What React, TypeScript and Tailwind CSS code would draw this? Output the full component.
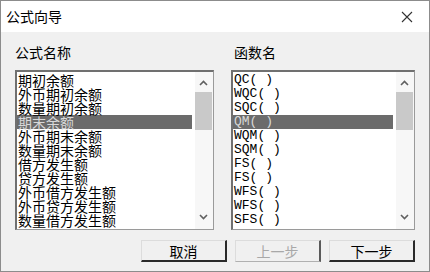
import React from "react";

const cjk = "font-['Noto_Sans_CJK_SC','Noto_Sans',sans-serif]";
const mono = "font-['Liberation_Mono','Noto_Sans_CJK_SC',monospace]";

const formulaNames = [
  "期初余额",
  "外币期初余额",
  "数量期初余额",
  "期末余额",
  "外币期末余额",
  "数量期末余额",
  "借方发生额",
  "贷方发生额",
  "外币借方发生额",
  "外币贷方发生额",
  "数量借方发生额",
];

const functionNames = [
  "QC( )",
  "WQC( )",
  "SQC( )",
  "QM( )",
  "WQM( )",
  "SQM( )",
  "FS( )",
  "FS( )",
  "WFS( )",
  "WFS( )",
  "SFS( )",
];

function Chevron({ up }: { up?: boolean }) {
  return (
    <svg width="9" height="6" viewBox="0 0 9 6" className="text-[#606060]">
      <path
        d={up ? "M1 5 L4.5 1.5 L8 5" : "M1 1 L4.5 4.5 L8 1"}
        fill="none"
        stroke="currentColor"
        strokeWidth="1.6"
      />
    </svg>
  );
}

type ListBoxProps = {
  items: string[];
  selected: number;
  fontClass: string;
  widthClass: string;
};

function ListBox({ items, selected, fontClass, widthClass }: ListBoxProps) {
  return (
    <div
      className={`flex h-[160px] ${widthClass} border-t-2 border-l-2 border-r border-b border-[#707070] border-r-[#9a9a9a] border-b-[#9a9a9a] bg-white`}
    >
      <div className="flex-1 overflow-hidden pt-[1px] pr-[3px]">
        {items.map((item, i) => (
          <div
            key={i}
            className={`h-[14px] pl-[1px] whitespace-nowrap leading-[14px] ${fontClass} ${
              i === selected ? "bg-[#6b6b6b] text-[#d8d8d8]" : "text-black"
            }`}
          >
            {item}
          </div>
        ))}
      </div>
      <div className="flex w-[18px] flex-col bg-[#f7f7f7] pr-[1px]">
        <div className="flex h-[20px] items-center justify-center pt-[2px]">
          <Chevron up />
        </div>
        <div className="h-[38px] bg-[#c9c9c9]" />
        <div className="flex-1" />
        <div className="flex h-[20px] items-center justify-center pb-[4px]">
          <Chevron />
        </div>
      </div>
    </div>
  );
}

function Button({ label, disabled }: { label: string; disabled?: boolean }) {
  return (
    <div
      className={`flex h-[22px] w-[86px] items-center justify-center border border-t-[#dcdcdc] border-l-[#dcdcdc] bg-[#f0f0f0] text-[14px] leading-[14px] ${cjk} ${
        disabled
          ? "border-r-2 border-r-[#5a5a5a] border-b-[#b0b0b0] text-[#a8a8a8]"
          : "border-r-2 border-b-2 border-r-[#2a2a2a] border-b-[#2a2a2a] text-black"
      }`}
    >
      {label}
    </div>
  );
}

export default function App() {
  return (
    <div className="flex h-[272px] w-[430px] flex-col border border-[#8c8c8c] bg-[#f0f0f0]">
      <div className="flex h-[31px] items-center justify-between bg-white pl-[5px] pr-[16px]">
        <span className={`text-[14px] text-black ${cjk}`}>公式向导</span>
        <svg width="12" height="12" viewBox="0 0 12 12">
          <path d="M1 1 L11 11 M11 1 L1 11" stroke="#333" strokeWidth="1.1" />
        </svg>
      </div>

      <div className="flex gap-[17px] pl-[14px] pt-[12px]">
        <div className="flex flex-col gap-[9px]">
          <span className={`h-[17px] text-[14px] leading-[17px] text-black ${cjk}`}>
            公式名称
          </span>
          <ListBox
            items={formulaNames}
            selected={3}
            fontClass={`text-[14px] ${cjk}`}
            widthClass="w-[199px]"
          />
        </div>
        <div className="flex flex-col gap-[9px]">
          <span
            className={`h-[17px] pl-[3px] text-[14px] leading-[17px] text-black ${cjk}`}
          >
            函数名
          </span>
          <ListBox
            items={functionNames}
            selected={3}
            fontClass={`text-[13px] ${mono}`}
            widthClass="w-[184px]"
          />
        </div>
      </div>

      <div className="flex justify-end gap-[8px] pr-[14px] pt-[10px]">
        <Button label="取消" />
        <Button label="上一步" disabled />
        <Button label="下一步" />
      </div>
    </div>
  );
}
